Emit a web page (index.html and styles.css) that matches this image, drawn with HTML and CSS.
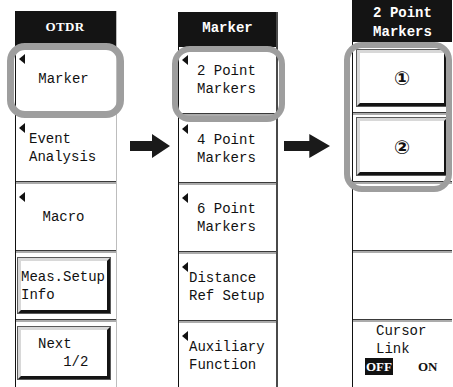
FILE: index.html
```html
<!DOCTYPE html>
<html lang="en">
<head>
  <meta charset="UTF-8">
  <meta name="viewport" content="width=device-width, initial-scale=1.0">
  <title>OTDR Marker Menus</title>
  <link rel="stylesheet" href="styles.css">
</head>
<body>
  <div class="stage">

    <!-- OTDR top menu -->
    <div class="menu menu-otdr">
      <div class="menu-head head-serif">OTDR</div>
      <div class="key sub focus focus-otdr centered">Marker</div>
      <div class="sep"></div>
      <div class="key sub pad-otdr">Event<br>Analysis</div>
      <div class="sep"></div>
      <div class="key sub centered">Macro</div>
      <div class="sep"></div>
      <div class="key boxed">
        <div class="raised raised-left">Meas.Setup<br>Info</div>
      </div>
      <div class="sep"></div>
      <div class="key boxed boxed-next">
        <div class="raised raised-next">Next<br>   1/2</div>
      </div>
    </div>

    <svg class="arrow arrow-one" viewBox="0 0 40 24" width="40" height="24">
      <polygon points="0,7 22,7 22,0 40,12 22,24 22,17 0,17" fill="#1a1a1a"/>
    </svg>

    <!-- Marker menu -->
    <div class="menu menu-marker">
      <div class="menu-head">Marker</div>
      <div class="key sub focus focus-marker pad-wide">2 Point<br>Markers</div>
      <div class="sep"></div>
      <div class="key sub pad-wide">4 Point<br>Markers</div>
      <div class="sep"></div>
      <div class="key sub pad-wide">6 Point<br>Markers</div>
      <div class="sep"></div>
      <div class="key sub pad-narrow">Distance<br>Ref Setup</div>
      <div class="sep"></div>
      <div class="key sub pad-narrow">Auxiliary<br>Function</div>
    </div>

    <svg class="arrow arrow-two" viewBox="0 0 40 24" width="46" height="24" preserveAspectRatio="none">
      <polygon points="0,7 22,7 22,0 40,12 22,24 22,17 0,17" fill="#1a1a1a"/>
    </svg>

    <!-- 2 Point Markers menu -->
    <div class="menu menu-points">
      <div class="menu-head head-tall">2 Point<br>Markers</div>
      <div class="group focus-group">
        <div class="key boxed">
          <div class="raised raised-num">&#9312;</div>
        </div>
        <div class="sep"></div>
        <div class="key boxed boxed-second">
          <div class="raised raised-num">&#9313;</div>
        </div>
      </div>
      <div class="sep"></div>
      <div class="key"></div>
      <div class="sep"></div>
      <div class="key"></div>
      <div class="sep"></div>
      <div class="key cursor-link">
        <div>Cursor</div>
        <div>Link</div>
        <div class="toggle">
          <span class="opt opt-on">OFF</span>
          <span class="opt">ON</span>
        </div>
      </div>
    </div>

  </div>
</body>
</html>
```

FILE: styles.css
```css
* {
  box-sizing: border-box;
}

body {
  margin: 0;
  padding: 0;
  background-color: #fff;
  color: #111;
  font-family: "Liberation Mono", "DejaVu Sans Mono", monospace;
  font-size: 14px;
  line-height: 18px;
  overflow: hidden;
}

.stage {
  display: flex;
  align-items: flex-start;
  width: 453px;
  height: 387px;
  overflow: hidden;
}

/* columns */

.menu {
  position: relative;
  display: flex;
  flex-direction: column;
  width: 102px;
  flex-shrink: 0;
  border-left: 1px solid #111;
}

.menu-otdr {
  margin-left: 15px;
  margin-top: 11px;
  border-right: 1px solid #bdbdbd;
}

.menu-marker {
  width: 100px;
  margin-top: 12px;
  border-right: 2px solid #4a4a4a;
}

.menu-points {
  width: 100px;
  margin-top: 0;
}

.menu-head {
  height: 35px;
  background-color: #141414;
  color: #fff;
  display: flex;
  align-items: center;
  justify-content: center;
  text-align: center;
  padding-bottom: 4px;
  font-weight: bold;
}

.head-serif {
  font-family: "Liberation Serif", serif;
  font-size: 13px;
  padding-right: 2px;
  letter-spacing: 0.3px;
}

.head-tall {
  height: 42px;
  margin-bottom: 4px;
  line-height: 19px;
  padding: 4px 0 0;
  align-items: flex-start;
}

/* soft keys */

.key {
  position: relative;
  height: 66px;
  display: flex;
  flex-direction: column;
  justify-content: center;
  white-space: pre;
}

.sub::before {
  content: "";
  position: absolute;
  left: 3px;
  top: 8px;
  border-right: 6px solid #111;
  border-top: 5px solid transparent;
  border-bottom: 5px solid transparent;
}

.centered {
  align-items: center;
  padding-right: 5px;
}

.pad-otdr {
  padding-left: 13px;
}

.pad-wide {
  padding-left: 18px;
}

.pad-narrow {
  padding-left: 10px;
}

.sep {
  height: 3px;
  border-top: 1px solid #3a3a3a;
  border-bottom: 2px solid #ababab;
}

/* raised (3D) keys */

.boxed {
  justify-content: flex-start;
  padding: 5px 6px 6px 2px;
}

.boxed-next {
  padding-bottom: 9px;
}

.menu-points .boxed {
  padding: 4px 5px 6px 4px;
}

.menu-points .boxed-second {
  padding-top: 3px;
}

.raised {
  flex: 1;
  display: flex;
  flex-direction: column;
  justify-content: center;
  border: 3px solid;
  border-color: #d8d8d8 #141414 #141414 #d8d8d8;
  outline: 1px solid #5a5a5a;
}

.raised-left {
  padding-left: 0;
}

.raised-next {
  padding-left: 17px;
}

.raised-num {
  align-items: center;
  font-family: "DejaVu Sans", "Noto Sans CJK JP", sans-serif;
  font-weight: bold;
  font-size: 19px;
}

/* focus frames */

.focus::after,
.focus-group::after {
  content: "";
  position: absolute;
  border: 7px solid #9e9e9e;
  border-radius: 18px;
  pointer-events: none;
}

.focus-otdr::after {
  top: -3px;
  bottom: -6px;
  left: -9px;
  right: -8px;
}

.focus-marker::after {
  top: -1px;
  bottom: -9px;
  left: -7px;
  right: -9px;
  border-width: 6px;
}

.group {
  position: relative;
  display: flex;
  flex-direction: column;
}

.focus-group::after {
  top: -4px;
  bottom: -11px;
  left: -9px;
  right: 0;
  border-width: 6px;
}

/* arrows */

.arrow {
  flex-shrink: 0;
  display: block;
}

.arrow-one {
  margin-top: 134px;
  margin-left: 13px;
  margin-right: 8px;
}

.arrow-two {
  margin-top: 134px;
  margin-left: 6px;
  margin-right: 22px;
}

/* cursor link */

.cursor-link {
  justify-content: flex-start;
  padding-left: 23px;
}

.toggle {
  display: flex;
  align-items: center;
  margin-left: -11px;
  gap: 24px;
}

.opt {
  font-family: "Liberation Serif", serif;
  font-weight: bold;
  font-size: 13px;
  line-height: 17px;
  padding: 0 1px;
}

.opt-on {
  background-color: #111;
  color: #fff;
}
```
